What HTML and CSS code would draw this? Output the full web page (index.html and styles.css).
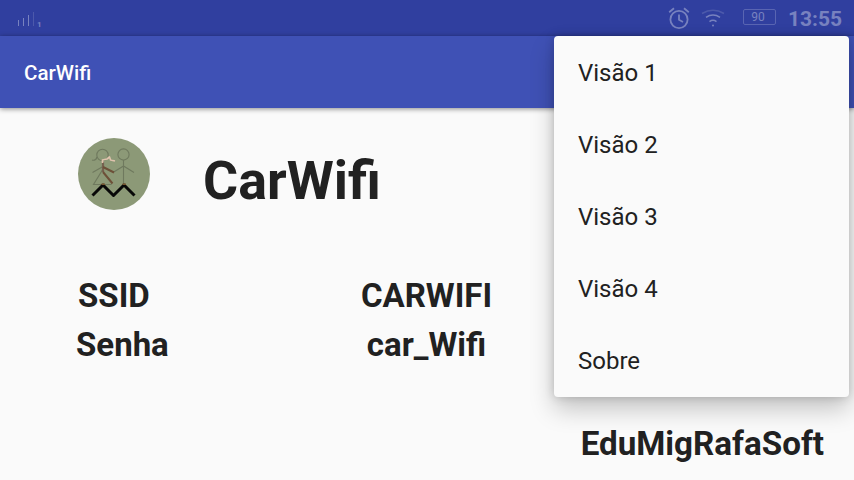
FILE: index.html
```html
<!DOCTYPE html>
<html lang="pt">
<head>
<meta charset="utf-8">
<title>CarWifi</title>
<link rel="stylesheet" href="styles.css">
</head>
<body>
<header class="status">
  <svg class="signal" width="26" height="18" viewBox="0 0 26 18">
    <path d="M1.5 11v6M6.500 9v8M11.500 6v11"/>
    <path class="faint" d="M16.500 3v14"/>
  </svg>
  <span class="sim">1</span>
  <svg class="alarm" width="22" height="22" viewBox="0 0 22 22">
    <circle cx="11" cy="12.500" r="8.600"/><path d="M11 7.500v5.300l4 2.200M1.200 5.200 6 1.300M20.800 5.200 16 1.300"/>
  </svg>
  <svg class="wifi" width="24" height="20" viewBox="0 0 24 20">
    <path class="faint" d="M1 5.500Q12-1 23 5.500"/>
    <path d="M5 9.300Q12 4.700 19 9.300M8.500 13.600Q12 11 15.500 13.600"/>
    <circle cx="12" cy="17.400" r="1"/>
  </svg>
  <span class="battery">90</span>
  <time class="clock">13:55</time>
</header>
<div class="toolbar">CarWifi</div>
<main class="content">
  <div class="brand">
    <svg class="logo" width="72" height="72" viewBox="0 0 72 72">
      <circle cx="36" cy="36" r="36" fill="#8c9977"/>
      <g fill="none" stroke="#6f795e" stroke-width="1.1">
        <circle cx="24.500" cy="17" r="5.700"/><circle cx="45.500" cy="16.500" r="5.600"/>
        <path d="M19 19q-1 4-5 3M31 19q1 4 4 3M45.500 22v24M35 34.500l10.500-6.500 10.500 6.500M14.500 34.500 25 28.500 25 31 15.500 46.500h18"/>
      </g>
      <g fill="none" stroke-linejoin="round">
        <path d="M25 34V24" stroke="#75614f" stroke-width="2.200"/>
        <path d="M25 29l11 5.500M25 34l9.500 11.500" stroke="#6d5038" stroke-width="2"/>
        <path d="M24.500 25v-3l4.500-1 2.500-2 1 3 4.500 1" stroke="#dfc3ad" stroke-width="1.700"/>
        <path d="M14.500 57.500 25 47 35.500 57.500 46 47 56.500 57.500" stroke="#080808" stroke-width="3"/>
        <path d="M23.500 46.300h3.500M44.500 46.300h3.500" stroke="#76552f" stroke-width="1.500"/>
      </g>
    </svg>
    <h1 class="title">CarWifi</h1>
  </div>
  <dl class="network">
    <dt>SSID</dt><dd>CARWIFI</dd>
    <dt class="password">Senha</dt><dd>car_Wifi</dd>
  </dl>
  <footer class="maker">EduMigRafaSoft</footer>
</main>
<ul class="menu">
  <li>Visão 1</li>
  <li>Visão 2</li>
  <li>Visão 3</li>
  <li>Visão 4</li>
  <li>Sobre</li>
</ul>
</body>
</html>
```
FILE: styles.css
```css
* { box-sizing: border-box; margin: 0; padding: 0; }
body {
  width: 854px;
  height: 480px;
  overflow: hidden;
  display: flex;
  flex-direction: column;
  background: #fafafa;
  color: #212121;
  font-family: Roboto, sans-serif;
}
.status {
  height: 36px;
  flex: none;
  display: flex;
  align-items: flex-start;
  padding-left: 17px;
  background: #303f9f;
  color: #7882bf;
}
.status svg { fill: none; stroke: currentColor; flex: none; }
.status .faint { opacity: .4; }
.signal { margin-top: 9px; stroke-width: 1; }
.sim { margin: 20px 0 0 -6px; font-size: 8px; line-height: 9px; font-weight: 700; width: 6px; }
.alarm { margin: 7px 0 0 625px; stroke-width: 1.8; }
.wifi { margin: 8px 0 0 11px; stroke-width: 1.6; }
.wifi circle { fill: currentColor; stroke: none; }
.battery {
  width: 33px;
  height: 16px;
  margin: 9px 0 0 18px;
  padding-right: 3px;
  border: 1px solid #5965b2;
  border-radius: 2px;
  font-size: 12px;
  line-height: 15px;
  text-align: center;
}
.clock { margin: 6px 0 0 12px; font-size: 21px; line-height: 26px; font-weight: 700; }
.toolbar {
  height: 72px;
  flex: none;
  padding-left: 24px;
  background: #3f51b5;
  color: #fff;
  font-size: 20.6px;
  line-height: 74px;
  font-weight: 500;
  box-shadow: 0 1px 5px rgba(0, 0, 0, .45);
}
.content {
  flex: 1;
  display: flex;
  flex-direction: column;
  padding: 30px 30px 0 78px;
}
.brand { display: flex; height: 72px; }
.title { margin: 11px 0 0 53px; font-size: 53.8px; line-height: 64px; font-weight: 700; }
.network {
  display: grid;
  grid-template-columns: 200px 297px;
  grid-auto-rows: 49px;
  margin-top: 61px;
  font-size: 33px;
  line-height: 49px;
  font-weight: 700;
}
.network dd { text-align: center; }
.password { margin-left: -2px; }
.maker { margin-top: 50px; align-self: flex-end; font-size: 33.2px; line-height: 49px; font-weight: 700; }
.menu {
  position: absolute;
  left: 554px;
  top: 36px;
  width: 295px;
  height: 361px;
  list-style: none;
  background: #fafafa;
  border-radius: 4px;
  box-shadow: 0 12px 24px rgba(0, 0, 0, .22), 0 0 10px rgba(0, 0, 0, .18);
}
.menu li { height: 72px; padding-left: 24px; font-size: 24px; line-height: 74px; }
```
